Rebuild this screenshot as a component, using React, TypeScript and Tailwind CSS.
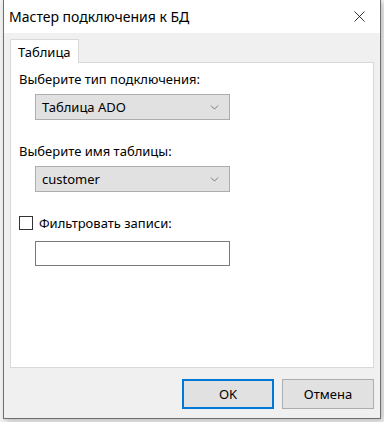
import { ChevronDown, X } from 'lucide-react';

const font = { fontFamily: '"Noto Sans", "Open Sans", sans-serif' };

function Select({ value }: { value: string }) {
  return (
    <div className="ml-4 flex h-[26px] w-[195px] items-center justify-between border border-[#adadad] bg-[#e1e1e1] pl-[6px] pr-[8px] text-black">
      <span>{value}</span>
      <ChevronDown size={13} strokeWidth={1.2} className="text-[#444]" />
    </div>
  );
}

export default function App() {
  return (
    <div className="h-[422px] w-[384px] bg-[#f4f4f4]" style={font}>
      <div className="ml-[3px] flex h-[419px] w-[378px] flex-col border-x border-b border-[#6f6f6f] bg-[#f0f0f0] shadow-[2px_2px_6px_rgba(0,0,0,0.25)]">
        {/* title bar */}
        <div className="flex h-[33px] items-center justify-between bg-white pl-[5px] pr-[11px]">
          <span className="text-[14px] text-black">Мастер подключения к БД</span>
          <X size={19} strokeWidth={1} className="text-black" />
        </div>

        {/* tabs */}
        <div className="flex flex-1 flex-col px-[6px] pt-[6px] text-[13px] leading-[18px]">
          <div className="flex">
            <div className="z-10 -mb-px flex h-[24px] items-center border border-b-0 border-[#d9d9d9] bg-white px-[7px] text-black">
              Таблица
            </div>
          </div>
          <div className="flex h-[306px] flex-col border border-[#d9d9d9] bg-white px-[8px] pt-[7px] text-black">
            <div className="mb-[6px]">Выберите тип подключения:</div>
            <Select value="Таблица ADO" />
            <div className="mb-[6px] mt-[22px]">Выберите имя таблицы:</div>
            <Select value="customer" />
            <div className="mt-[22px] flex items-center gap-[6px]">
              <div className="h-[14px] w-[14px] border border-[#333] bg-white" />
              <span>Фильтровать записи:</span>
            </div>
            <div className="ml-4 mt-[9px] h-[25px] w-[195px] border border-[#7a7a7a] bg-white" />
          </div>

          {/* buttons */}
          <div className="mt-[11px] flex justify-end gap-[8px]">
            <button className="h-[30px] w-[92px] border-2 border-[#0078d7] bg-[#e1e1e1] text-black">
              OK
            </button>
            <button className="h-[30px] w-[92px] border border-[#adadad] bg-[#e1e1e1] text-black">
              Отмена
            </button>
          </div>
        </div>
      </div>
    </div>
  );
}
